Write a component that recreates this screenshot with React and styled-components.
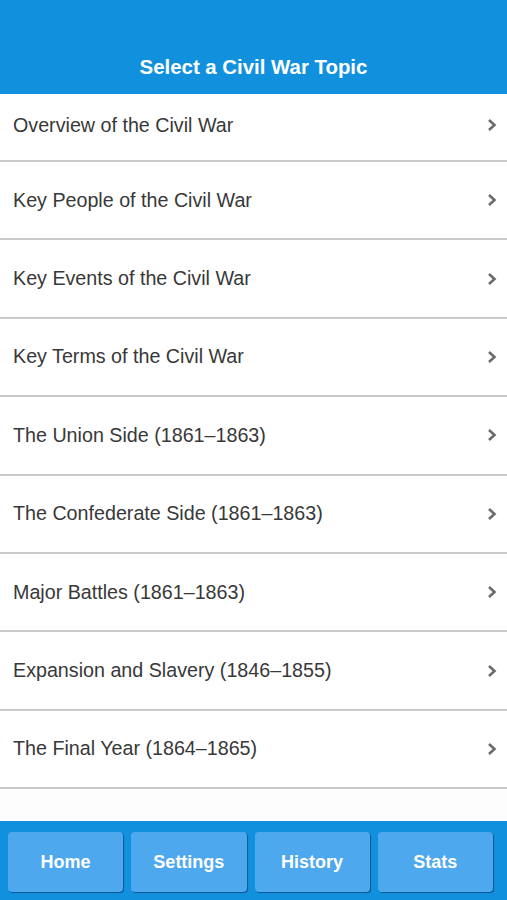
import React from 'react';
import styled, { createGlobalStyle } from 'styled-components';

const GlobalStyle = createGlobalStyle`
  html, body {
    margin: 0;
    padding: 0;
    background: #fdfdfd;
    font-family: "Liberation Sans", Arial, sans-serif;
  }
`;

const Screen = styled.div`
  width: 507px;
  height: 900px;
  display: flex;
  flex-direction: column;
  overflow: hidden;
  background: #fdfdfd;
`;

const Header = styled.header`
  height: 94px;
  flex-shrink: 0;
  background: #1191dd;
  display: flex;
  align-items: flex-end;
  justify-content: center;
  padding-bottom: 15px;
  box-sizing: border-box;
`;

const Title = styled.h1`
  margin: 0;
  color: #fff;
  font-size: 20.4px;
  font-weight: bold;
`;

const TopicList = styled.ul`
  list-style: none;
  margin: 0;
  padding: 0;
  flex: 1;
  overflow: hidden;
`;

const TopicRow = styled.li`
  height: ${(p) => (p.$first ? '62px' : '76.4px')};
  display: flex;
  align-items: center;
  justify-content: space-between;
  padding: ${(p) => (p.$first ? '0 10px 4px 13px' : '0 10px 0 13px')};
  background: #fff;
  border-bottom: 2px solid #c9c9c9;
  box-sizing: content-box;
`;

const TopicLabel = styled.span`
  color: #383838;
  font-size: 19.7px;
`;

const Chevron = styled.svg`
  width: 10px;
  height: 14px;
  flex-shrink: 0;
`;

const Footer = styled.nav`
  height: 79px;
  flex-shrink: 0;
  background: #1191dd;
  display: grid;
  grid-template-columns: repeat(4, 1fr);
  gap: 8px;
  padding: 11px 14px 8px 8px;
  box-sizing: border-box;
`;

const TabButton = styled.button`
  border: none;
  border-radius: 4px;
  background: #4ea8ee;
  color: #fff;
  font-family: "Liberation Sans", Arial, sans-serif;
  font-size: 18px;
  font-weight: bold;
  box-shadow: 1px 1px 1px rgba(0, 40, 90, 0.55);
  padding: 0;
`;

const topics = [
  'Overview of the Civil War',
  'Key People of the Civil War',
  'Key Events of the Civil War',
  'Key Terms of the Civil War',
  'The Union Side (1861\u20131863)',
  'The Confederate Side (1861\u20131863)',
  'Major Battles (1861\u20131863)',
  'Expansion and Slavery (1846\u20131855)',
  'The Final Year (1864\u20131865)',
];

const tabs = ['Home', 'Settings', 'History', 'Stats'];

const App = () => (
  <>
    <GlobalStyle />
    <Screen>
      <Header>
        <Title>Select a Civil War Topic</Title>
      </Header>
      <TopicList>
        {topics.map((topic, i) => (
          <TopicRow key={topic} $first={i === 0}>
            <TopicLabel>{topic}</TopicLabel>
            <Chevron viewBox="0 0 10 14">
              <path d="M2 2 L7.5 7 L2 12" fill="none" stroke="#6b6b6b" strokeWidth="2.6" />
            </Chevron>
          </TopicRow>
        ))}
      </TopicList>
      <Footer>
        {tabs.map((tab) => (
          <TabButton key={tab}>{tab}</TabButton>
        ))}
      </Footer>
    </Screen>
  </>
);

export default App;
